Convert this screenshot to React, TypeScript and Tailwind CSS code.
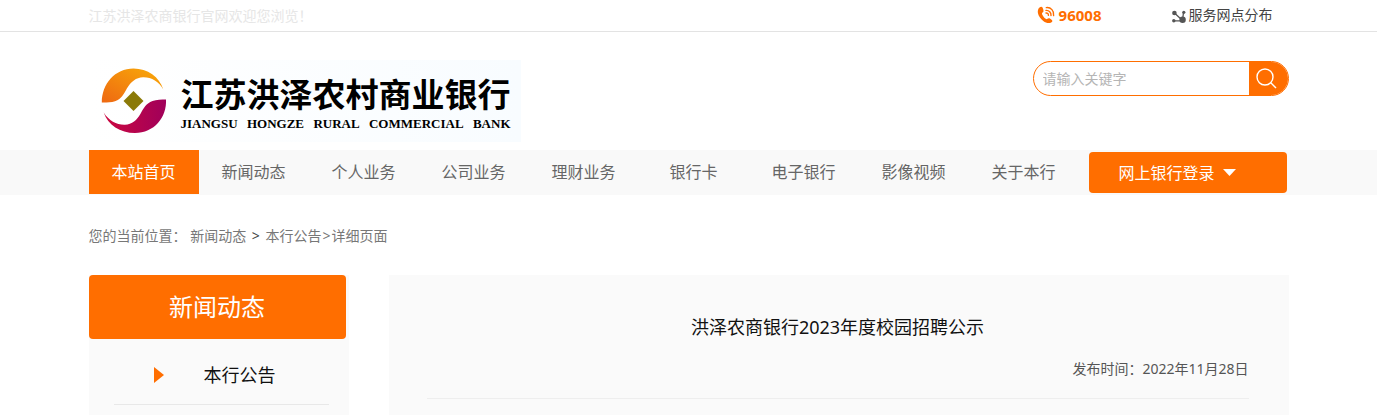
type NavItem = {
  label: string;
  href: string;
};

const NAV_ITEMS: NavItem[] = [
  { label: '本站首页', href: '#home' },
  { label: '新闻动态', href: '#news' },
  { label: '个人业务', href: '#personal' },
  { label: '公司业务', href: '#company' },
  { label: '理财业务', href: '#finance' },
  { label: '银行卡', href: '#card' },
  { label: '电子银行', href: '#ebank' },
  { label: '影像视频', href: '#video' },
  { label: '关于本行', href: '#about' },
];

function PhoneIcon() {
  return (
    <svg className="h-[18px] w-[18px]" viewBox="0 0 18 18" aria-hidden="true">
      <path
        d="M2.500 1.500C3.500.7 5 .6 5.500 1.500c.6 1.100 1 2.300 1 3.400 0 .9-.5 1.300-1.100 1.700-.5.4-.5.9-.3 1.600.7 1.900 2 3.500 3.600 4.600.7.5 1.200.5 1.700 0 .7-.7 1.300-.8 2.100-.5 1.100.5 2 1.200 2.600 2 .7 1-.1 1.900-1.400 2.400-2.300.9-5 .1-7.400-1.800C3.600 12.800 1.400 9.900.9 7 .6 4.900 1 2.800 2.500 1.500z"
        fill="#ff6e00"
      />
      <g fill="none" stroke="#ff6e00" strokeWidth="1.400" strokeLinecap="round">
        <path d="M9.300 1.600C13.800 1 17.400 5 16.600 9.600" />
        <path d="M9 4.400c3-.3 5.300 2.100 5 5.100" />
        <path d="M9 7c1.500-.1 2.500.9 2.400 2.400" />
      </g>
    </svg>
  );
}

function BranchIcon() {
  return (
    <svg className="mt-0.5 h-[13px] w-[14px]" viewBox="0 0 14 13" aria-hidden="true">
      <path d="M2.500 3L10 10M11.500 2.500l-1 8M2 10.800h8" stroke="#555" strokeWidth="1.300" fill="none" />
      <circle cx="2.400" cy="3" r="2.300" fill="#555" />
      <circle cx="11.800" cy="2.300" r="1.600" fill="#555" />
      <circle cx="1.800" cy="10.800" r="1.700" fill="#555" />
      <circle cx="10.600" cy="9.700" r="3.200" fill="#555" />
    </svg>
  );
}

function BankMark() {
  return (
    <svg className="h-[66px] w-[66px] shrink-0" viewBox="0 0 66 66" aria-hidden="true">
      <defs>
        <linearGradient id="markTop" x1="0" y1="1" x2="1" y2="0">
          <stop offset="0" stopColor="#ee6812" />
          <stop offset="1" stopColor="#f9ac08" />
        </linearGradient>
        <linearGradient id="markBottom" x1="0" y1="0" x2="1" y2="0">
          <stop offset="0" stopColor="#cc0840" />
          <stop offset="1" stopColor="#a0005a" />
        </linearGradient>
      </defs>
      <path
        d="M.8 34.500C.8 16 14 .6 32.500.6c14 0 26 8.500 29.800 21C58 13.500 50 9 42 9.300c-7 .2-12 4.500-16 11-3.500 6-5 10.500-12 13-4 1.300-9 1.200-13.200 1.200z"
        fill="url(#markTop)"
      />
      <path
        d="M65 31.500c1 18-12 33.500-31 33.500C19 65 7 57 2.700 44.500 8 53 16 57 24 56.700c7-.3 12-4.700 15.500-11 3.500-6 5.500-10.200 12-12.700 4-1.400 9-1.500 13.500-1.500z"
        fill="url(#markBottom)"
      />
      <path d="M32.500 23L42.500 33 32.500 43 22.500 33z" fill="#8b7a08" />
    </svg>
  );
}

function TopBar() {
  return (
    <div className="border-b border-[#e3e3e3]">
      <div className="mx-auto flex h-[31px] max-w-[1200px] items-center justify-between pr-4 text-sm">
        <p className="text-[#e6e6e6]">江苏洪泽农商银行官网欢迎您浏览！</p>
        <div className="flex items-center gap-[70px]">
          <a href="tel:96008" className="flex items-center gap-1 text-[15px] font-bold text-[#ff6e00]">
            <PhoneIcon />
            96008
          </a>
          <a href="#branches" className="flex items-center gap-[3px] text-[#444]">
            <BranchIcon />
            服务网点分布
          </a>
        </div>
      </div>
    </div>
  );
}

function Header() {
  return (
    <header className="mx-auto flex h-[118px] max-w-[1200px] items-start justify-between pt-7">
      <a
        href="#home"
        className="flex h-[82px] w-[432px] items-center gap-3.5 bg-gradient-to-r from-white to-[#f8fcff] pl-3 text-black"
      >
        <BankMark />
        <span className="flex flex-col pt-1 whitespace-nowrap">
          <span className="text-[33px] leading-[42px] font-bold">江苏洪泽农村商业银行</span>
          <span className="flex justify-between font-['Liberation_Serif',serif] text-[13px] leading-4 font-bold">
            <span>JIANGSU</span> <span>HONGZE</span> <span>RURAL</span> <span>COMMERCIAL</span> <span>BANK</span>
          </span>
        </span>
      </a>
      <form
        className="mt-px flex h-[35px] w-64 overflow-hidden rounded-full border border-[#ff6e00]"
        onSubmit={(e) => e.preventDefault()}
      >
        <input
          type="text"
          aria-label="请输入关键字"
          placeholder="请输入关键字"
          className="min-w-0 flex-1 bg-transparent pl-[9px] text-sm outline-none placeholder:text-[#b5b5b5]"
        />
        <button type="submit" aria-label="搜索" className="flex w-[39px] items-center justify-center bg-[#ff6e00] pr-1">
          <svg className="h-[21px] w-[21px]" viewBox="0 0 21 21" fill="none" stroke="#fff" strokeWidth="1.400" aria-hidden="true">
            <circle cx="9" cy="9" r="8" />
            <path d="M14.800 14.800L20 20" />
          </svg>
        </button>
      </form>
    </header>
  );
}

function NavBar() {
  return (
    <nav className="bg-[#f9f9f9]">
      <div className="mx-auto flex h-[45px] max-w-[1200px] items-start text-base">
        {NAV_ITEMS.map((item, i) => (
          <a
            key={item.href}
            href={item.href}
            className={
              i === 0
                ? 'w-[110px] bg-[#ff6e00] text-center leading-[44px] text-white'
                : 'w-[110px] text-center leading-[44px] text-[#666]'
            }
          >
            {item.label}
          </a>
        ))}
        <button
          type="button"
          className="mt-0.5 ml-2.5 flex h-[41px] w-[198px] items-center gap-2 rounded bg-[#ff6e00] pl-[30px] text-white"
        >
          网上银行登录
          <svg className="h-[7px] w-[13px]" viewBox="0 0 13 7" aria-hidden="true">
            <path d="M0 0h13L6.500 7z" fill="#fff" />
          </svg>
        </button>
      </div>
    </nav>
  );
}

function Sidebar() {
  return (
    <aside className="w-[260px] bg-[#fafafa]">
      <h2 className="mr-[3px] rounded bg-[#ff6e00] text-center text-2xl leading-[64px] text-white">新闻动态</h2>
      <ul className="pr-5 pl-[25px]">
        <li className="border-b border-[#e8e8e8]">
          <a href="#notice" className="flex h-[65px] items-center gap-10 pt-1.5 pl-10 text-lg text-[#111]">
            <svg className="h-4 w-2.5" viewBox="0 0 10 16" aria-hidden="true">
              <path d="M0 0l10 8L0 16z" fill="#ff6e00" />
            </svg>
            本行公告
          </a>
        </li>
      </ul>
    </aside>
  );
}

export default function App() {
  return (
    <div className="min-h-screen bg-white font-['Noto_Sans','Noto_Sans_CJK_SC',sans-serif]">
      <TopBar />
      <Header />
      <NavBar />
      <div className="mx-auto flex h-20 max-w-[1200px] items-center pt-0.5 text-sm whitespace-pre text-[#777]">
        您的当前位置： <a href="#news">新闻动态</a>
        <span className="px-0.5 text-[#444]">{' > '}</span>
        <a href="#notice">本行公告</a>
        <span className="px-px">&gt;</span>
        <span>详细页面</span>
      </div>
      <div className="mx-auto flex max-w-[1200px] justify-between">
        <Sidebar />
        <main className="min-h-[140px] w-[900px] bg-[#fafafa] pr-10 pl-[38px]">
          <article className="border-b border-[#eee] pt-10 pb-[19px]">
            <h1 className="text-center text-lg leading-6 text-[#111]">洪泽农商银行2023年度校园招聘公示</h1>
            <p className="mt-5 text-right text-sm leading-5 text-[#555]">发布时间：2022年11月28日</p>
          </article>
        </main>
      </div>
    </div>
  );
}
